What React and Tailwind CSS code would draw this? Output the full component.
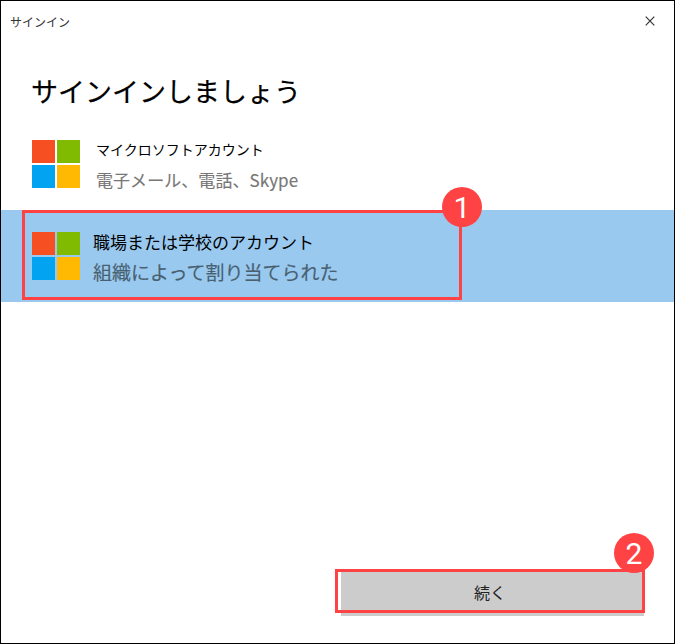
function Logo() {
  return (
    <div className="grid h-12 w-12 shrink-0 grid-cols-2 gap-0.5">
      <div className="bg-[#f65022]" />
      <div className="bg-[#80ba01]" />
      <div className="bg-[#02a4f2]" />
      <div className="bg-[#ffb902]" />
    </div>
  );
}

function Badge({ children, className }) {
  return (
    <div className={`absolute flex h-10 w-10 items-center justify-center rounded-full bg-[#ff4344] font-['Roboto','Liberation_Sans',sans-serif] text-[30px] leading-none text-white ${className}`}>
      <span className="pt-px">{children}</span>
    </div>
  );
}

export default function App() {
  return (
    <div className="flex h-[644px] w-[675px] flex-col overflow-hidden border border-black bg-white font-['Noto_Sans_CJK_JP',sans-serif] text-black">
      <header className="flex h-10 shrink-0 items-center justify-between pr-[19px] pl-[9px]">
        <span className="pt-0.5 text-[12px] leading-5 text-[#333]">サインイン</span>
        <svg className="mb-px h-2.5 w-2.5" viewBox="0 0 10 10" fill="none" stroke="#333" strokeWidth="1.2">
          <path d="M.7 .7l8.6 8.6M9.3 .7l-8.6 8.6" />
        </svg>
      </header>

      <h1 className="h-[77px] shrink-0 pt-[30px] pl-[30px] text-[27px] leading-10 [-webkit-text-stroke:0.2px]">サインインしましょう</h1>

      <button className="flex h-[92px] shrink-0 items-center gap-4 pl-[31px] text-left">
        <Logo />
        <span className="flex flex-col">
          <span className="text-[14px] leading-[30px]">マイクロソフトアカウント</span>
          <span className="text-[17px] leading-[31px] tracking-[0.06px] text-[#777] [-webkit-text-stroke:0.15px]">電子メール、電話、Skype</span>
        </span>
      </button>

      <button className="relative flex h-[92px] shrink-0 items-center gap-[13px] bg-[#99c9ef] pl-[31px] text-left">
        <Logo />
        <span className="flex flex-col pt-0.5">
          <span className="text-[17px] leading-[30px]">職場または学校のアカウント</span>
          <span className="text-[19px] leading-[30px] text-[#48606f] [-webkit-text-stroke:0.15px]">組織によって割り当てられた</span>
        </span>
        <span className="absolute top-0 left-[21px] h-[90px] w-[440px] border-3 border-[#ff4344]" />
        <Badge className="-top-[23px] left-[441px]">1</Badge>
      </button>

      <footer className="mt-auto flex justify-end pr-[30px] pb-[27px]">
        <button className="relative h-11 w-[303px] bg-[#ccc] text-[16px] leading-10 text-[#222]">
          <span className="block h-11 pr-[5px]">続く</span>
          <span className="absolute -top-[3px] -left-[6px] h-11 w-[310px] border-3 border-[#ff4344]" />
          <Badge className="-top-[39px] left-[273px]">2</Badge>
        </button>
      </footer>
    </div>
  );
}
